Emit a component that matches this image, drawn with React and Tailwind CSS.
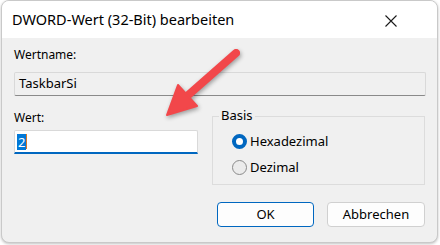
import React from "react";

function App() {
  const font = { fontFamily: '"Noto Sans", "Open Sans", sans-serif' };
  return (
    <div className="relative w-[440px] h-[245px] bg-white pl-[1px]" style={font}>
      {/* dialog window */}
      <div className="w-[437px] h-[243px] rounded-lg border border-[#c9c9c9] bg-[#f0f0f0] overflow-hidden shadow-[0_1px_3px_rgba(0,0,0,0.25)]">
        {/* title bar */}
        <div className="h-[37px] bg-white flex items-center justify-between pl-[10px] pr-[40px]">
          <span className="text-[14.5px] text-black leading-none">
            DWORD-Wert (32-Bit) bearbeiten
          </span>
          <svg width="12" height="12" viewBox="0 0 12 12" className="mt-[2px]">
            <path d="M0.5 0.5 L11.5 11.5 M11.5 0.5 L0.5 11.5" stroke="#1a1a1a" strokeWidth="1.1" />
          </svg>
        </div>

        {/* body */}
        <div className="px-[12px] pt-[9px] text-[12px] text-black">
          <div className="leading-[16px]">Wertname:</div>
          <div className="mt-[9px] h-[24px] w-[412px] border border-[#d9d9d9] border-b-[#8a8a8a] rounded-[2px] bg-[#f0f0f0] flex items-center pl-[4px] text-[13px]">
            TaskbarSi
          </div>

          <div className="flex mt-[14px]">
            <div className="w-[186px] shrink-0">
              <div className="leading-[16px]">Wert:</div>
              <div className="mt-[4px] h-[24px] w-[184px] bg-white border border-[#d9d9d9] border-b-2 border-b-[#0067c0] rounded-t-[2px] flex items-center pl-[2px] text-[13px]">
                <span className="bg-[#0078d7] text-white leading-[16px] px-[1px]">2</span>
                <span className="w-[1px] h-[15px] bg-[#d4752a]" />
              </div>
            </div>

            <div className="ml-[12px] mt-[6px] w-[216px] h-[69px] border border-[#dcdcdc] relative">
              <span className="absolute -top-[10px] left-[6px] bg-[#f0f0f0] px-[2px] leading-[16px] text-[13px]">
                Basis
              </span>
              <div className="pl-[19px] pt-[16px] flex flex-col gap-[10px] text-[13px]">
                <div className="flex items-center gap-[3px] leading-[16px]">
                  <span className="w-[15px] h-[15px] rounded-full border-[4px] border-[#0067c0] bg-white" />
                  <span>Hexadezimal</span>
                </div>
                <div className="flex items-center gap-[3px] leading-[16px]">
                  <span className="w-[15px] h-[15px] rounded-full border border-[#8a8a8a] bg-[#ebebeb]" />
                  <span>Dezimal</span>
                </div>
              </div>
            </div>
          </div>

          <div className="flex justify-end gap-[13px] mt-[17px]">
            <button className="w-[97px] h-[25px] rounded-[4px] border border-[#0067c0] bg-[#fdfdfd] text-[13px] leading-none">
              OK
            </button>
            <button className="w-[98px] h-[25px] rounded-[4px] border border-[#d0d0d0] bg-[#fdfdfd] text-[13px] leading-none">
              Abbrechen
            </button>
          </div>
        </div>
      </div>

      {/* red annotation arrow */}
      <svg
        className="absolute left-0 top-0 pointer-events-none drop-shadow-[1px_2px_2px_rgba(0,0,0,0.35)]"
        width="440"
        height="245"
        viewBox="0 0 440 245"
      >
        <line x1="236" y1="53" x2="186" y2="97" stroke="#f2474a" strokeWidth="8" strokeLinecap="round" />
        <polygon points="167,115 178,85 197,106" fill="#f2474a" stroke="#f2474a" strokeWidth="2" strokeLinejoin="round" />
      </svg>
    </div>
  );
}

export default App;
